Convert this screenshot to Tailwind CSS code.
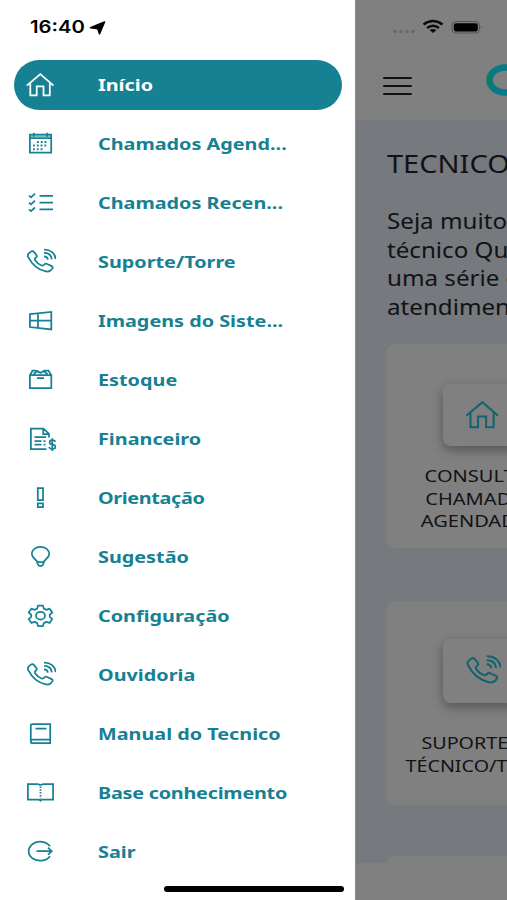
<!DOCTYPE html>
<html lang="pt-BR">
<head>
<meta charset="utf-8">
<title>Menu</title>
<script src="https://cdn.jsdelivr.net/npm/@tailwindcss/browser@4"></script>
</head>
<body class="w-[507px] h-[900px] overflow-hidden bg-white font-['Noto_Sans','Open_Sans',sans-serif]">
<svg class="hidden">
  <symbol id="house" viewBox="0 0 32 32"><path d="M2.8 16.700 16.300 5.200l13.200 11.500M6.300 14.500V26.300h6.400V17.300h6.800v9h6.300V14.500"/></symbol>
  <symbol id="phone" viewBox="0 0 32 32"><path d="M4.400 11.400c-1.500-2.300.2-4.600 3.200-6.100.9-.4 1.700-.2 2.300.6l2.600 3.300c.6 1 .3 1.800-.5 2.400-1.400.9-1.600 1.500-.9 2.700 1.600 2.500 3.800 4.200 6.600 5.200 1.300.4 2-.1 2.900-1.200.6-.8 1.500-.9 2.500-.3l4.600 2.100c1 .6 1.200 1.400.7 2.300-1.600 2.600-4 3.900-7.300 2.800C13.700 23.500 8 18.400 4.400 11.400ZM20 10.400c2.200 0 3.600 1.300 3.900 3.300M20 7c4.500-.1 7.300 2.400 7.800 6.400M20 3.600c6.500-.2 11.100 3.600 11.700 9.500"/></symbol>
</svg>
<div class="flex h-full">
  <aside class="flex w-[355px] shrink-0 flex-col bg-white text-[#168193]">
    <div class="flex h-[55px] items-center gap-[5px] pl-[30px] text-black">
      <span class="w-[54px] text-[17px] leading-none font-semibold font-['Inter',sans-serif]"><span class="inline-block origin-left scale-x-[1.19]">16:40</span></span>
      <svg class="h-[14px] w-[17px]" viewBox="0 0 17 14"><path d="M15.500 1 10.500 12.800 8.800 7.600 1.500 6.700Z" fill="#000" stroke="#000" stroke-width="1.600" stroke-linejoin="round"/></svg>
    </div>
    <nav class="flex flex-col text-[16.500px] leading-none whitespace-nowrap [&_b]:ml-[42px] [&_b]:origin-left [&_b]:scale-x-[1.2] [&_b]:pt-[2px] [&_b]:font-bold [&_svg]:h-8 [&_svg]:w-8 [&_svg]:fill-none [&_svg]:stroke-current [&_svg]:stroke-[1.750]">
      <a class="flex h-[59px] items-center pl-[14px]"><span class="flex h-[50px] w-[328px] items-center rounded-full bg-[#168193] pl-[10px] text-white"><svg><use href="#house"/></svg><b>Início</b></span></a>
      <a class="flex h-[59px] items-center pl-6"><svg viewBox="0 0 32 32"><path d="M5.900 6.500h21.300v18.200H5.900ZM5.900 10.200h21.300" /><path d="M6 8.100h21" stroke-width=".9"/><path d="M9.800 4.800v4M23.200 4.800v4" stroke-width="1.700"/><path d="M13 14h11M9 17.600h15M9 21.300h11" stroke-width="2" stroke-dasharray="1.800 2"/></svg><b>Chamados Agend...</b></a>
      <a class="flex h-[59px] items-center pl-6"><svg viewBox="0 0 32 32"><path d="M15.500 8.800H29M15.500 15.600H29M15.500 22.400H29M5 8.600l2 1.700 4-3.600M5 15.600l2 1.700 4-3.600M5 22.400l2 1.700 4-3.600"/></svg><b>Chamados Recen...</b></a>
      <a class="flex h-[59px] items-center pl-6"><svg><use href="#phone"/></svg><b>Suporte/Torre</b></a>
      <a class="flex h-[59px] items-center pl-6"><svg viewBox="0 0 32 32"><path d="M5.900 9.200 27.300 7v17.400L5.900 22ZM14 8.300v14.600M5.700 15.600h21.600"/></svg><b>Imagens do Siste...</b></a>
      <a class="flex h-[59px] items-center pl-6"><svg viewBox="0 0 32 32"><path d="M5.900 11.200h21.400v13H5.900ZM5.900 11.200 8.500 6.700h3l4.700 2 4.700-2h3.600l2.800 4.500M13 14h7M9.500 10l4-3 3 2 3-2 4 3"/></svg><b>Estoque</b></a>
      <a class="flex h-[59px] items-center pl-6"><svg viewBox="0 0 32 32"><path d="M22.500 26H6.900V5.700h12.600l5.500 5.100v3.700M19.200 5.700v5.300H25M10.500 14h11.500M10.500 18h7M10.500 21.600h7M19.500 18h2M19.500 21.600h2"/><path d="M31.500 18.800c-.6-1.200-1.600-1.700-3-1.700-3.700 0-3.900 3.700-.3 4.300 4.400.6 4.200 4.600.3 4.600-1.800 0-3-.7-3.500-2M28.300 15.300v12.600"/></svg><b>Financeiro</b></a>
      <a class="flex h-[59px] items-center pl-6"><svg viewBox="0 0 32 32"><path d="M13.800 6.100h5.200v12.100h-5.200ZM13.800 21.300h5.200v3.800h-5.200Z"/></svg><b class="tracking-[-0.3px]">Orientação</b></a>
      <a class="flex h-[59px] items-center pl-6"><svg viewBox="0 0 32 32"><path d="M13.200 21C13.200 18.800 7.800 17.500 7.800 13 7.800 8.800 11.700 5.800 16.500 5.800s8.700 3 8.700 7.200c0 4.500-5.400 5.800-5.400 8ZM13.200 21l.6 2.400 1.500 1.500h2.400l1.500-1.500.6-2.400"/></svg><b>Sugestão</b></a>
      <a class="flex h-[59px] items-center pl-6"><svg viewBox="0 0 32 32"><path d="M14 5.500h5l.8 3.100 2.500 1.200 3.300-1.100 2.700 3.800-2.500 2.200v2.200l2.500 2.200-2.700 3.800-3.300-1-2.500 1.200-.8 2.900h-5l-.8-2.900-2.500-1.200-3.300 1-2.700-3.800 2.500-2.200v-2.200l-2.500-2.200 2.700-3.800 3.300 1.100 2.500-1.200Z" stroke-linejoin="round"/><ellipse cx="16.500" cy="15.700" rx="4.500" ry="3.900"/></svg><b>Configuração</b></a>
      <a class="flex h-[59px] items-center pl-6"><svg><use href="#phone"/></svg><b>Ouvidoria</b></a>
      <a class="flex h-[59px] items-center pl-6"><svg viewBox="0 0 32 32"><path d="M26.200 21.600V6H8.500Q6.800 6 6.800 7.500V23.500Q6.800 25.200 8.500 25.200H26.200V21.600H8.500Q6.800 21.600 6.800 23.400M11.500 10.700h11"/></svg><b>Manual do Tecnico</b></a>
      <a class="flex h-[59px] items-center pl-6"><svg viewBox="0 0 32 32"><path d="M16.500 8.400Q15.500 7.200 13.500 7.200H3.900V22.600h10.300q1.700 0 2.300 1 .6-1 2.300-1H29.100V7.200H19.500q-2 0-3 1.200"/><path d="M16.500 9.500v12" stroke-dasharray="1.500 1.300"/></svg><b class="tracking-[-0.2px]">Base conhecimento</b></a>
      <a class="flex h-[59px] items-center pl-6"><svg viewBox="0 0 32 32"><path d="M26 10.200A11.500 9.500 0 1 0 26 20.200M12.500 15.200h15M24 11.700l3.700 3.500-3.700 3.500"/></svg><b>Sair</b></a>
    </nav>
  </aside>
  <main class="flex flex-1 min-w-0 flex-col overflow-hidden border-l border-[#8c8c8c] bg-[#76797d] text-[#111214]">
    <header class="h-[120px] shrink-0 bg-[#808080]">
      <div class="flex h-[54px] items-center pl-[36px]">
        <svg class="h-[20px] w-[96px]" viewBox="0 0 96 20"><g fill="#686868"><circle cx="3" cy="14.500" r="1.700"/><circle cx="9" cy="14.500" r="1.700"/><circle cx="15" cy="14.500" r="1.700"/><circle cx="21" cy="14.500" r="1.700"/></g><g fill="none" stroke="#0a0a0a" stroke-width="2.500"><path d="M31.500 7.500Q41 .5 50.500 7.500M35 11Q41 6.500 47 11"/></g><path d="m41 16-3.500-2.900q3.500-2.300 7 0Z" fill="#0a0a0a"/><rect x="60" y="4.500" width="27.500" height="11.500" rx="3.500" fill="none" stroke="#555"/><rect x="61.800" y="6.200" width="24" height="8.200" rx="1.800" fill="#000"/><path d="M89.300 8.500q1.500 1.700 0 3.500Z" fill="#444"/></svg>
      </div>
      <div class="flex h-[63px] items-center pl-[27px]">
        <div class="flex w-[29px] shrink-0 flex-col gap-[6px]"><i class="h-[2px] rounded bg-[#111]"></i><i class="h-[2px] rounded bg-[#111]"></i><i class="h-[2px] rounded bg-[#111]"></i></div>
        <svg class="ml-[73px] -mt-[11px] h-[34px] w-[42px] shrink-0" viewBox="0 0 42 34"><defs><linearGradient id="ring"><stop stop-color="#087d68"/><stop offset=".15" stop-color="#087988"/></linearGradient></defs><ellipse cx="20.500" cy="17" rx="16" ry="12.500" fill="none" stroke="url(#ring)" stroke-width="6.500"/></svg>
      </div>
    </header>
    <section class="h-[224px] shrink-0 pl-[31px] pt-[27px] whitespace-nowrap">
      <h1 class="origin-left scale-x-[1.16] text-[25px] leading-[32px]">TECNICO</h1>
      <p class="mt-[28px] origin-left scale-x-[1.15] text-[21px] leading-[28.500px]">Seja muito<br>técnico Qu<br>uma série de<br>atendimento</p>
    </section>
    <article class="ml-[30px] flex h-[204px] w-[192px] shrink-0 flex-col items-center rounded-[10px] bg-[#808080] pt-[40px]">
      <div class="flex h-[62px] w-[78px] items-center justify-center rounded-[8px] bg-[#808080] shadow-[0_4px_12px_rgba(0,0,0,0.35)]"><svg class="h-[38px] w-[38px] fill-none stroke-[#10636f] stroke-[1.700]"><use href="#house"/></svg></div>
      <p class="mt-[19px] scale-x-[1.18] text-center text-[17px] leading-[22.700px]">CONSULTAR<br>CHAMADOS<br>AGENDADOS</p>
    </article>
    <article class="mt-[53px] ml-[30px] flex h-[204px] w-[192px] shrink-0 flex-col items-center rounded-[10px] bg-[#808080] pt-[38px]">
      <div class="flex h-[64px] w-[78px] items-center justify-center rounded-[8px] bg-[#808080] shadow-[0_4px_12px_rgba(0,0,0,0.35)]"><svg class="h-[38px] w-[38px] fill-none stroke-[#10636f] stroke-[1.700]"><use href="#phone"/></svg></div>
      <p class="mt-[29px] scale-x-[1.16] text-center text-[17px] leading-[22.700px]"><span class="mr-[29px]">SUPORTE</span><br>TÉCNICO/TORRE</p>
    </article>
    <div class="mt-[51px] ml-[30px] h-[7px] w-[192px] shrink-0 rounded-t-[10px] bg-[#808080]"></div>
    <div class="flex-1 bg-[#808080]"></div>
  </main>
</div>
<div class="fixed bottom-[8.500px] left-[164px] h-[5.500px] w-[180px] rounded-full bg-black"></div>
</body>
</html>
